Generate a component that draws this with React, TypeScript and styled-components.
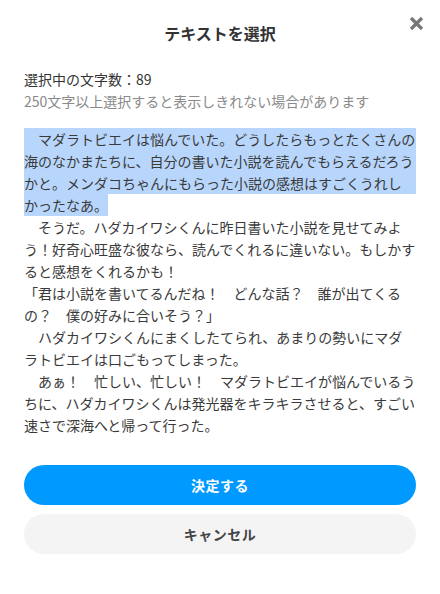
import React from "react";
import styled, { createGlobalStyle } from "styled-components";

const GlobalStyle = createGlobalStyle`
  html, body {
    margin: 0;
    padding: 0;
    background: #ffffff;
  }
  body {
    font-family: "Noto Sans CJK JP", "Noto Sans", "Liberation Sans", sans-serif;
    color: #333333;
    -webkit-font-smoothing: antialiased;
  }
  * { box-sizing: border-box; }
`;

const Dialog = styled.div`
  width: 440px;
  padding: 0 24px 40px;
  background: #ffffff;
`;

const Header = styled.header`
  position: relative;
  padding: 21px 0;
  display: flex;
  justify-content: center;
`;

const Title = styled.h1`
  margin: 0;
  font-size: 16px;
  line-height: 24px;
  font-weight: 700;
  color: #333333;
`;

const CloseButton = styled.button`
  position: absolute;
  top: 14px;
  right: -9px;
  width: 18px;
  height: 18px;
  padding: 0;
  border: none;
  background: transparent;
  display: flex;
  align-items: center;
  justify-content: center;
  cursor: pointer;
`;

const Info = styled.div`
  margin-top: 2px;
  display: flex;
  flex-direction: column;
`;

const InfoLine = styled.p<{ $muted?: boolean }>`
  margin: 0;
  font-size: 14px;
  line-height: 22px;
  color: ${(p) => (p.$muted ? "#8a8a8a" : "#333333")};
`;

const Body = styled.div`
  margin-top: 16px;
  font-size: 14px;
  line-height: 22px;
  color: #3a3a3a;
  white-space: pre;
`;

const Para = styled.p`
  margin: 0;
`;

const Line = styled.span`
  display: block;
`;

const SelectedBlock = styled.span`
  display: block;
  background: #b8d6fb;
`;

const SelectedTail = styled.span`
  display: inline-block;
  background: #b8d6fb;
  line-height: 22px;
  vertical-align: top;
`;

const Actions = styled.div`
  margin-top: 29px;
  display: flex;
  flex-direction: column;
  gap: 9px;
`;

const ActionButton = styled.button<{ $primary?: boolean }>`
  height: 40px;
  width: 100%;
  border: none;
  border-radius: 20px;
  font-family: inherit;
  font-size: 14px;
  font-weight: 700;
  letter-spacing: 0.5px;
  background: ${(p) => (p.$primary ? "#0099ff" : "#f4f4f4")};
  color: ${(p) => (p.$primary ? "#ffffff" : "#444444")};
  cursor: pointer;
`;

const selectedLines = [
  "\u3000マダラトビエイは悩んでいた。どうしたらもっとたくさんの",
  "海のなかまたちに、自分の書いた小説を読んでもらえるだろう",
  "かと。メンダコちゃんにもらった小説の感想はすごくうれし",
];
const selectedTail = "かったなあ。";

const paragraphs: string[][] = [
  [
    "\u3000そうだ。ハダカイワシくんに昨日書いた小説を見せてみよ",
    "う！好奇心旺盛な彼なら、読んでくれるに違いない。もしかす",
    "ると感想をくれるかも！",
  ],
  [
    "「君は小説を書いてるんだね！\u3000どんな話？\u3000誰が出てくる",
    "の？\u3000僕の好みに合いそう？」",
  ],
  [
    "\u3000ハダカイワシくんにまくしたてられ、あまりの勢いにマダ",
    "ラトビエイは口ごもってしまった。",
  ],
  [
    "\u3000あぁ！\u3000忙しい、忙しい！\u3000マダラトビエイが悩んでいるう",
    "ちに、ハダカイワシくんは発光器をキラキラさせると、すごい",
    "速さで深海へと帰って行った。",
  ],
];

export default function App() {
  return (
    <>
      <GlobalStyle />
      <Dialog>
        <Header>
          <Title>テキストを選択</Title>
          <CloseButton aria-label="閉じる">
            <svg width="15" height="15" viewBox="0 0 15 15">
              <path
                d="M2 2 L13 13 M13 2 L2 13"
                stroke="#777777"
                strokeWidth="3.2"
                strokeLinecap="butt"
                fill="none"
              />
            </svg>
          </CloseButton>
        </Header>
        <Info>
          <InfoLine>選択中の文字数：89</InfoLine>
          <InfoLine $muted>250文字以上選択すると表示しきれない場合があります</InfoLine>
        </Info>
        <Body>
          <Para>
            <SelectedBlock>
              {selectedLines.map((l, i) => (
                <Line key={i}>{l}</Line>
              ))}
            </SelectedBlock>
            <SelectedTail>{selectedTail}</SelectedTail>
          </Para>
          {paragraphs.map((lines, pi) => (
            <Para key={pi}>
              {lines.map((l, i) => (
                <Line key={i}>{l}</Line>
              ))}
            </Para>
          ))}
        </Body>
        <Actions>
          <ActionButton $primary>決定する</ActionButton>
          <ActionButton>キャンセル</ActionButton>
        </Actions>
      </Dialog>
    </>
  );
}
